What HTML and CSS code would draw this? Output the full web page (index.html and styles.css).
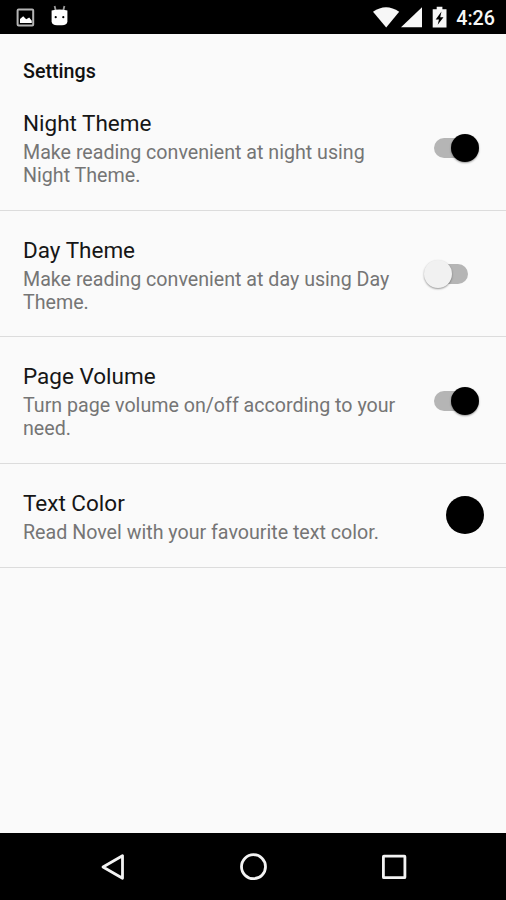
FILE: index.html
```html
<!DOCTYPE html>
<html lang="en">
<head>
<meta charset="utf-8">
<title>Settings</title>
<link rel="stylesheet" href="styles.css">
</head>
<body>
<div class="screen">
  <header class="status-bar">
    <svg class="notifications" width="80" height="34" viewBox="0 0 80 34">
      <rect x="17.6" y="9.6" width="15.6" height="15.8" rx="1" fill="none" stroke="#b4b4b4" stroke-width="2"/>
      <path d="M20 23v-4l3.2-2.7 3 3 3-1.800 2.600 3.200V23z" fill="#fff"/>
      <path d="M54.600 6l1 4M64.400 6l-1 4" stroke="#999" stroke-width="1.800"/>
      <path d="M51.600 10.500Q59.500 8.500 67.400 10.500V21.500Q67 25.300 62 25.300H57Q52 25.300 51.600 21.500z" fill="#fff"/>
      <circle cx="55.700" cy="17.200" r="1.100"/><circle cx="63.300" cy="17.200" r="1.100"/>
    </svg>
    <div class="system">
      <svg width="78" height="34" viewBox="369.300 0 78 34" fill="#f7f7f7">
        <path d="M373.300 11.800Q386.300 2.500 399.500 11.800L386.500 27.500z"/>
        <path d="M422.300 7.300V27.300H401.300z"/>
        <path d="M437 6.700h5.700v2.500h4.100v18.200h-13.800V9.200h4z"/>
        <path d="M441.800 11.500l-5.800 8h3.300l-1.300 5.300 5.800-7.500h-3.300z" fill="#000"/>
      </svg>
      <span class="time">4:26</span>
    </div>
  </header>
  <main class="content">
    <h1 class="heading">Settings</h1>
    <section class="row">
      <div class="copy"><h2>Night Theme</h2><p>Make reading convenient at night using<br>Night Theme.</p></div>
      <div class="switch on"><span class="thumb"></span></div>
    </section>
    <section class="row">
      <div class="copy"><h2>Day Theme</h2><p>Make reading convenient at day using Day<br>Theme.</p></div>
      <div class="switch"><span class="thumb"></span></div>
    </section>
    <section class="row">
      <div class="copy"><h2>Page Volume</h2><p>Turn page volume on/off according to your<br>need.</p></div>
      <div class="switch on"><span class="thumb"></span></div>
    </section>
    <section class="row">
      <div class="copy"><h2>Text Color</h2><p>Read Novel with your favourite text color.</p></div>
      <div class="swatch"></div>
    </section>
  </main>
  <nav class="nav-bar">
    <svg width="28" height="28" viewBox="0 0 28 28"><path d="M4 14L23.500 2.700v22.600z"/></svg>
    <svg width="28" height="28" viewBox="0 0 28 28"><circle cx="14.500" cy="13.700" r="12"/></svg>
    <svg width="28" height="28" viewBox="0 0 28 28"><rect x="3.400" y="3.200" width="21.500" height="21.500" rx=".5"/></svg>
  </nav>
</div>
</body>
</html>
```
FILE: styles.css
```css
* { box-sizing: border-box; }
body { margin: 0; font-family: Roboto, sans-serif; }
.screen { width: 506px; height: 900px; display: flex; flex-direction: column; background: #fafafa; overflow: hidden; }
.status-bar { height: 34px; background: #000; display: flex; justify-content: space-between; }
.system { display: flex; padding-right: 11px; gap: 9px; }
.time { color: #f7f7f7; font-size: 19.7px; font-weight: 500; line-height: 37px; }
.content { flex: 1; }
.heading { height: 50px; margin: 0; padding: 26px 23px 0; font-size: 19.7px; line-height: 23px; font-weight: 500; color: #111; }
.row { display: flex; justify-content: space-between; padding: 26px 22px 22px 23px; height: 126.5px; border-bottom: 1.5px solid #dcdcdc; }
.row:last-child { height: 104px; }
.copy h2 { margin: 0; font-size: 22.5px; line-height: 26px; font-weight: 400; color: #161616; }
.copy p { margin: 5px 0 0; font-size: 19.65px; line-height: 23px; color: #757575; white-space: nowrap; }
.switch { width: 34px; height: 20px; margin: 27.5px 16px 0 0; border-radius: 10px; background: #b5b5b5; display: flex; align-items: center; }
.thumb { flex: none; width: 28px; height: 28px; margin-left: -10px; border-radius: 50%; background: #f1f1f1; box-shadow: 0 1px 2px rgba(0,0,0,.4); }
.switch.on .thumb { margin-left: 17px; background: #000; }
.swatch { width: 38px; height: 38px; margin-top: 6.5px; border-radius: 50%; background: #000; }
.nav-bar { height: 67px; background: #000; display: flex; justify-content: center; align-items: center; gap: 112.5px; }
.nav-bar svg { fill: none; stroke: #f3f3f3; stroke-width: 2.8; stroke-linejoin: round; }
```
